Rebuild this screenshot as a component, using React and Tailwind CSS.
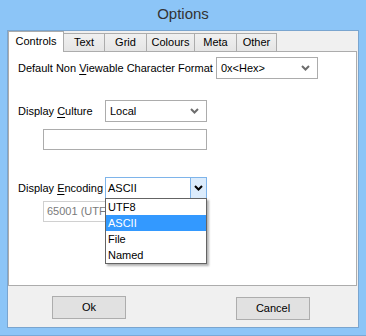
const Chevron = ({ className = '' }) => (
  <svg width="9" height="6" viewBox="0 0 9 6" className={className}>
    <path d="M1 1 L4.5 4.5 L8 1" fill="none" stroke="currentColor" strokeWidth="2" />
  </svg>
);

const Select = ({ value, w = 'w-[102px]' }) => (
  <div className={`${w} h-[22px] border border-[#acacac] bg-white flex items-center pl-[4px] pr-[7px] shrink-0`}>
    <span className="flex-1">{value}</span>
    <Chevron className="text-[#6d6d6d]" />
  </div>
);

const tabs = [
  { label: 'Text', w: 'w-[41px]' },
  { label: 'Grid', w: 'w-[42px]' },
  { label: 'Colours', w: 'w-[48px]' },
  { label: 'Meta', w: 'w-[42px]' },
  { label: 'Other', w: 'w-[40px]' },
];

const items = ['UTF8', 'ASCII', 'File', 'Named'];

export default function App() {
  return (
    <div className="w-[366px] h-[336px] bg-[#8cc5f7] flex flex-col font-['Liberation_Sans',Arial,sans-serif] text-[11px] text-black whitespace-nowrap border-b border-[#78a9d8]">
      {/* title bar */}
      <div className="h-[30px] flex items-center justify-center text-[15px] text-[#333] pb-[1px]">Options</div>

      {/* client area */}
      <div className="mx-[7px] h-[298px] border border-[#7aa5cf] bg-[#f0f0f0] flex flex-col">
        {/* tab strip */}
        <div className="h-[20px] flex items-end relative z-10">
          <div className="w-[56px] h-[21px] -mb-[1px] bg-white border border-b-0 border-[#acacac] flex items-center justify-center leading-none pb-[2px]">
            Controls
          </div>
          {tabs.map((t) => (
            <div
              key={t.label}
              className={`${t.w} h-[18px] border-t border-r border-[#acacac] bg-gradient-to-b from-[#f0f0f0] to-[#e5e5e5] flex items-center justify-center leading-none`}
            >
              {t.label}
            </div>
          ))}
        </div>

        {/* tab panel */}
        <div className="w-[349px] h-[235px] border border-[#acacac] bg-white pt-[5px] pl-[9px] flex flex-col">
          <div className="flex items-center h-[22px]">
            <span className="w-[198px] shrink-0">
              Default Non <span className="underline underline-offset-2">V</span>iewable Character Format
            </span>
            <Select value="0x<Hex>" />
          </div>

          <div className="flex items-center h-[22px] mt-[21px]">
            <span className="w-[87px] shrink-0">
              Display <span className="underline underline-offset-2">C</span>ulture
            </span>
            <Select value="Local" />
          </div>

          <div className="ml-[25px] mt-[7px] w-[164px] h-[21px] border border-[#acacac] bg-white" />

          <div className="flex items-center h-[22px] mt-[27px] relative z-10">
            <span className="w-[87px] shrink-0">
              Display <span className="underline underline-offset-2">E</span>ncoding
            </span>
            <div className="w-[102px] h-[22px] border border-[#7eb4ea] bg-white flex items-center shrink-0 relative">
              <span className="flex-1 pl-[2px]">ASCII</span>
              <div className="w-[16px] h-full bg-[#dcecfc] border-l border-[#7eb4ea] flex items-center justify-center">
                <Chevron className="text-black" />
              </div>
              {/* open dropdown list */}
              <div className="absolute left-[-1px] top-[20px] w-[102px] border border-[#646464] bg-white shadow-[2px_2px_2px_rgba(0,0,0,0.3)]">
                {items.map((it) => (
                  <div
                    key={it}
                    className={`h-[16px] flex items-center pl-[2px] leading-none ${it === 'ASCII' ? 'bg-[#3399ff] text-white' : ''}`}
                  >
                    {it}
                  </div>
                ))}
              </div>
            </div>
          </div>

          <div className="ml-[25px] mt-[2px] w-[164px] h-[21px] border border-[#d0d0d0] bg-white flex items-center pl-[3px] text-[#7a7a7a]">
            65001 (UTF-8)
          </div>
        </div>

        {/* buttons */}
        <div className="flex mt-[10px]">
          <button className="ml-[44px] w-[74px] h-[23px] border border-[#adadad] bg-[#e1e1e1] flex items-center justify-center leading-none">
            Ok
          </button>
          <button className="ml-[110px] mt-[1px] w-[74px] h-[23px] border border-[#adadad] bg-[#e1e1e1] flex items-center justify-center leading-none">
            Cancel
          </button>
        </div>
      </div>
    </div>
  );
}
